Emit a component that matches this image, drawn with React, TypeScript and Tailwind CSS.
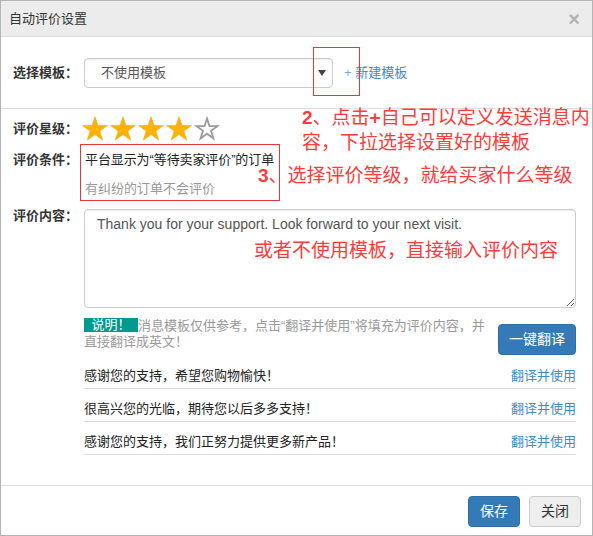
import React from "react";

const FONT = "font-['Liberation_Sans','Noto_Sans_CJK_SC',sans-serif]";

function Star({ filled }: { filled: boolean }) {
  const pts =
    "14,0.8 17,9.6 26.4,9.6 18.8,15.1 21.7,24 14,18.5 6.3,24 9.2,15.1 1.6,9.6 11,9.6";
  return (
    <svg width="28" height="26" viewBox="0 0 28 26">
      {filled ? (
        <polygon points={pts} fill="#ffb300" stroke="#f5a800" strokeWidth="0.6" strokeLinejoin="round" />
      ) : (
        <polygon points="14,2.6 16.5,10.2 24.4,10.2 18,14.8 20.4,22.4 14,17.7 7.6,22.4 10,14.8 3.6,10.2 11.5,10.2" fill="#fff" stroke="#9a9a9a" strokeWidth="1.8" strokeLinejoin="miter" />
      )}
    </svg>
  );
}

const rows = [
  "感谢您的支持，希望您购物愉快！",
  "很高兴您的光临，期待您以后多多支持！",
  "感谢您的支持，我们正努力提供更多新产品！",
];

export default function App() {
  return (
    <div className={`relative w-[593px] h-[536px] border border-[#b4b4b4] bg-white flex flex-col text-[#333] ${FONT}`}>
      {/* header */}
      <div className="h-[36px] shrink-0 bg-[#ececec] border-b border-[#dcdcdc] flex items-center justify-between pl-[8px] pr-[12px]">
        <span className="text-[13px] leading-[16px] text-[#333]">自动评价设置</span>
        <span className="text-[20px] leading-[20px] font-bold text-[#b3b3b3]">×</span>
      </div>

      {/* template select */}
      <div className="h-[72px] shrink-0 border-b border-[#dedede] flex items-center pl-[12px]">
        <span className="w-[71px] text-[13px] font-bold text-[#333]">选择模板：</span>
        <div className="w-[249px] h-[30px] border border-[#cccccc] rounded-[4px] flex items-center justify-between pl-[16px] pr-[5px] shadow-[inset_0_1px_1px_rgba(0,0,0,0.075)]">
          <span className="text-[13px] text-[#555]">不使用模板</span>
          <svg width="8" height="6" viewBox="0 0 8 6" className="mr-[1px]">
            <polygon points="0,0 8,0 4,6" fill="#444" />
          </svg>
        </div>
        <span className="ml-[11px] text-[13px] text-[#3d8ccb]">
          <span className="text-[#6aaee6]">+</span> 新建模板
        </span>
      </div>

      {/* body */}
      <div className="h-[377px] shrink-0 border-b border-[#dedede] pl-[12px] pr-[16px] pt-[7px]">
        {/* stars */}
        <div className="flex items-center h-[26px]">
          <span className="w-[71px] text-[13px] font-bold">评价星级：</span>
          <div className="flex -ml-[3px]">
            <Star filled />
            <Star filled />
            <Star filled />
            <Star filled />
            <Star filled={false} />
          </div>
        </div>

        {/* condition */}
        <div className="flex items-start mt-[2px]">
          <span className="w-[71px] text-[13px] font-bold leading-[20px] pt-[6px]">评价条件：</span>
          <div className="-ml-[4px] w-[200px] border border-[#e8373a] pl-[4px] pt-[5px] pb-[1px]">
            <div className="text-[13px] leading-[20px] text-[#222] whitespace-nowrap tracking-[-0.1px]">平台显示为“等待卖家评价”的订单</div>
            <div className="mt-[9px] text-[13px] leading-[20px] text-[#999]">有纠纷的订单不会评价</div>
          </div>
        </div>

        {/* content */}
        <div className="flex items-start mt-[8px]">
          <span className="w-[71px] shrink-0 text-[13px] font-bold leading-[14px]">评价内容：</span>
          <textarea
            readOnly
            defaultValue="Thank you for your support. Look forward to your next visit."
            className="flex-1 h-[99px] border border-[#cccccc] rounded-[4px] px-[12px] pt-[4px] text-[14px] leading-[20px] text-[#555] font-['Liberation_Sans',sans-serif] shadow-[inset_0_1px_1px_rgba(0,0,0,0.075)] outline-none"
          />
        </div>

        {/* notice */}
        <div className="flex justify-between mt-[10px] pl-[71px]">
          <div className="text-[13px] leading-[16px] text-[#9a9a9a]">
            <div className="whitespace-nowrap">
              <span className="inline-block w-[54px] h-[14px] leading-[14px] text-center bg-[#009a8e] text-white align-[1px]">说明！</span>
              消息模板仅供参考，点击“翻译并使用”将填充为评价内容，并
            </div>
            <div className="whitespace-nowrap">直接翻译成英文！</div>
          </div>
          <button className="mt-[6px] w-[78px] h-[31px] bg-[#337ab7] border border-[#2e6da4] rounded-[4px] text-white text-[14px]">
            一键翻译
          </button>
        </div>

        {/* template rows */}
        <div className="ml-[71px] mt-[1px]">
          {rows.map((r) => (
            <div key={r} className="h-[33px] border-b border-[#dddddd] flex items-start justify-between pt-[10px]">
              <span className="text-[13px] leading-[20px] text-[#222]">{r}</span>
              <span className="text-[13px] leading-[20px] text-[#3d8ccb]">翻译并使用</span>
            </div>
          ))}
        </div>
      </div>

      {/* footer */}
      <div className="flex-1 flex items-start justify-end gap-[9px] pt-[10px] pr-[11px]">
        <button className="w-[52px] h-[31px] bg-[#337ab7] border border-[#2e6da4] rounded-[4px] text-white text-[14px]">保存</button>
        <button className="w-[52px] h-[31px] bg-[#eeeeee] border border-[#cccccc] rounded-[4px] text-[#333] text-[14px]">关闭</button>
      </div>

      {/* annotations */}
      <div className="absolute left-[312px] top-[46px] w-[47px] h-[49px] border border-[#e8373a]" />
      <div className="absolute left-[301px] top-[104px] text-[19px] leading-[25px] text-[#ff3b3b] whitespace-nowrap">
        <span className="font-bold">2</span>、点击<span className="font-bold">+</span>自己可以定义发送消息内
        <br />
        容，下拉选择设置好的模板
      </div>
      <div className="absolute left-[257px] top-[162px] text-[19px] leading-[25px] text-[#ff3b3b] whitespace-nowrap">
        <span className="font-bold">3</span>、选择评价等级，就给买家什么等级
      </div>
      <div className="absolute left-[253px] top-[237px] text-[19px] leading-[25px] text-[#ff3b3b] whitespace-nowrap">
        或者不使用模板，直接输入评价内容
      </div>
    </div>
  );
}
